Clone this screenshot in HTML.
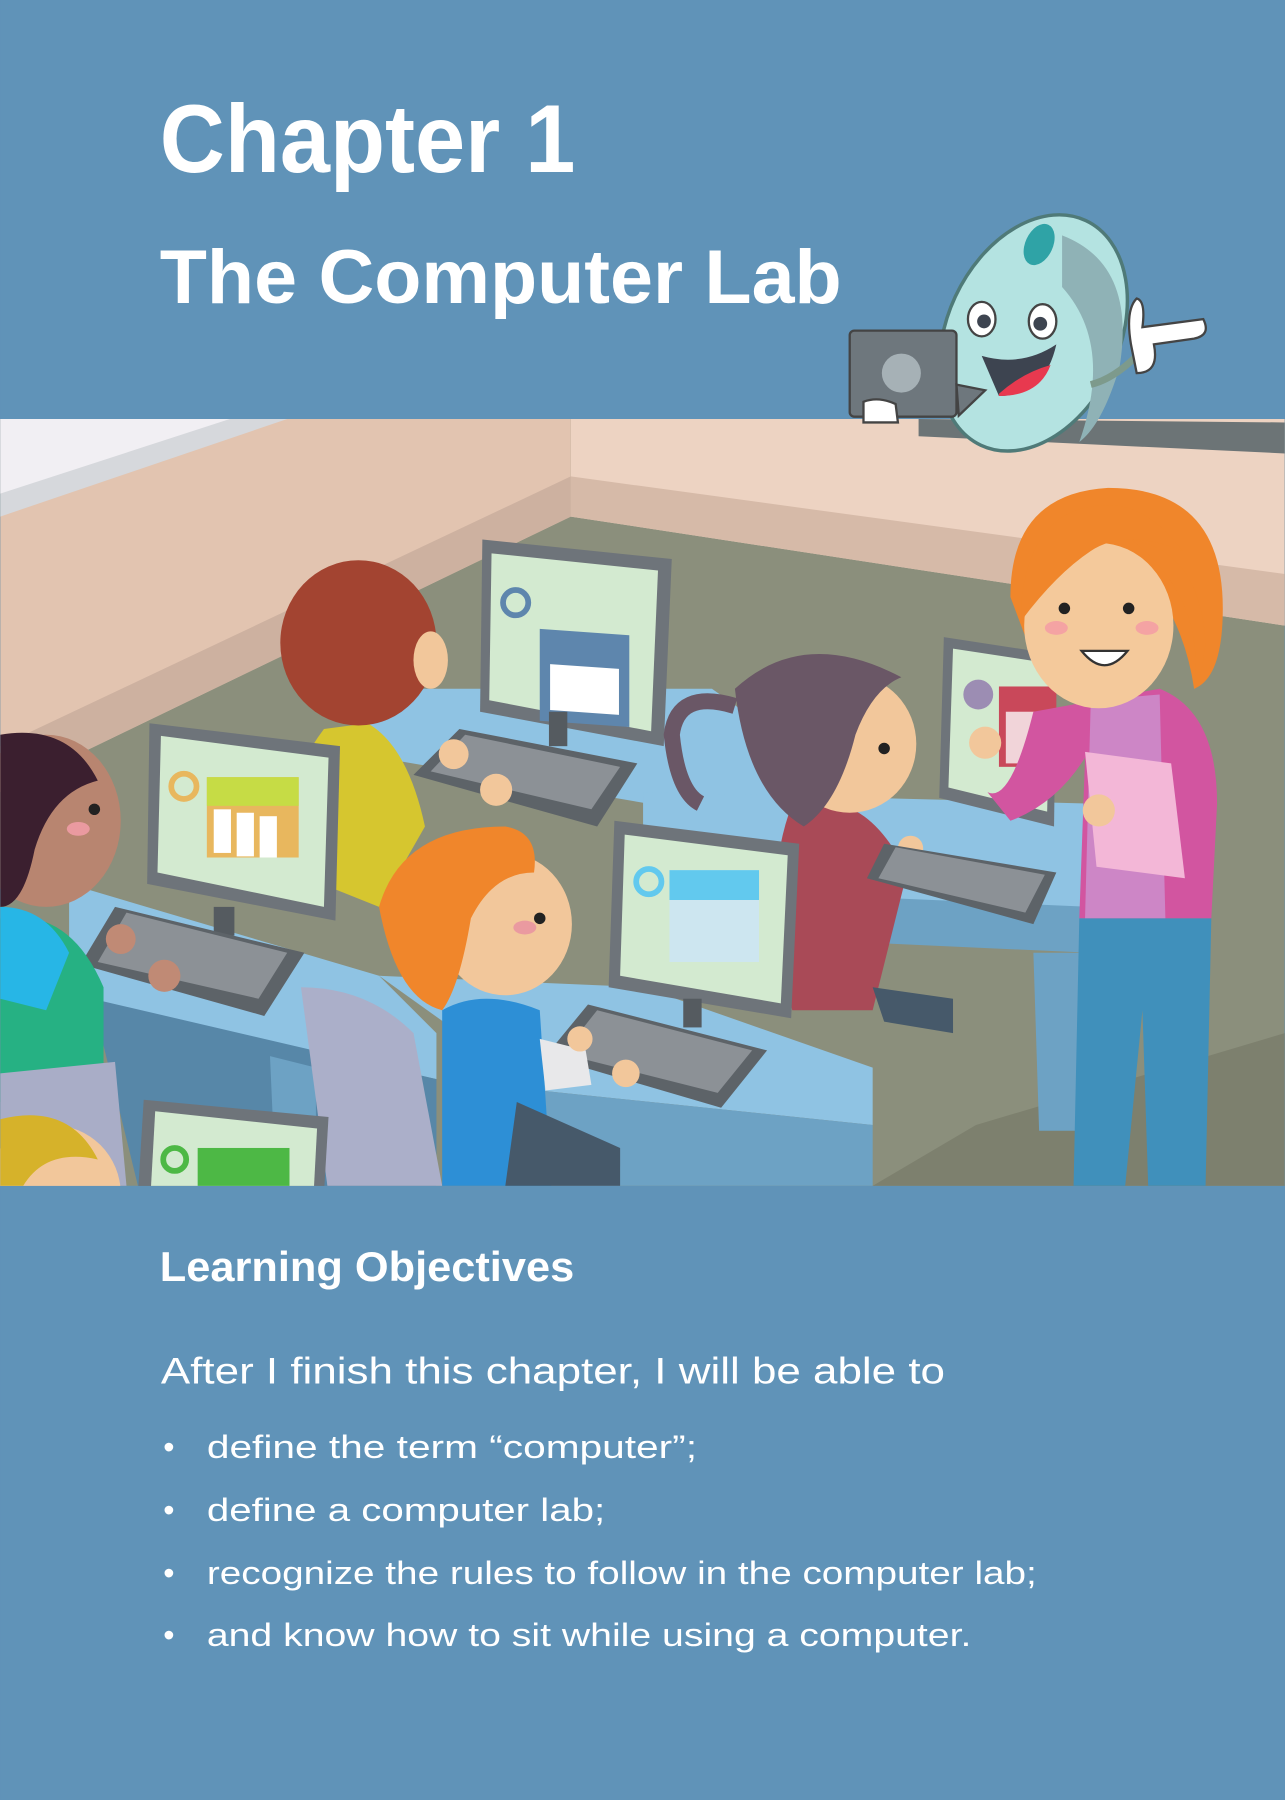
<!DOCTYPE html>
<html><head><meta charset="utf-8"><style>
html,body{margin:0;padding:0;background:#6093b8;}
svg{display:block}
</style></head><body>
<svg width="1285" height="1800" viewBox="0 0 1119 1568" xmlns="http://www.w3.org/2000/svg">
<rect width="1119" height="1568" fill="#6093b8"/>
<text x="139" y="150" font-family="Liberation Sans, sans-serif" font-weight="bold" font-size="84" textLength="362" lengthAdjust="spacingAndGlyphs" fill="#fff">Chapter 1</text>
<text x="139" y="264" font-family="Liberation Sans, sans-serif" font-weight="bold" font-size="66" textLength="594" lengthAdjust="spacingAndGlyphs" fill="#fff">The Computer Lab</text>

<g>
<clipPath id="c"><rect x="0" y="365" width="1119" height="668"/></clipPath>
<g clip-path="url(#c)">
<rect x="0" y="365" width="1119" height="668" fill="#8b8f7c"/>
<polygon points="497,365 1119,365 1119,545 497,450" fill="#edd3c2"/>
<polygon points="497,415 1119,500 1119,545 497,450" fill="#d6baa8"/>
<polygon points="800,365 1119,368 1119,395 800,380" fill="#6c7476"/>
<polygon points="0,365 497,365 497,450 0,690" fill="#e2c4b0"/>
<polygon points="0,365 250,365 0,450" fill="#d6d8dc"/>
<polygon points="0,365 200,365 0,430" fill="#f1eff3"/>
<polygon points="0,650 497,415 497,450 0,690" fill="#cdb1a0"/>
<polygon points="760,1033 1119,1033 1119,900 850,980" fill="#7d806e"/>

<polygon points="300,600 620,600 760,700 740,730 330,660" fill="#8fc3e3"/>
<polygon points="560,690 950,700 950,830 560,760" fill="#8fc3e3"/>
<polygon points="720,780 950,790 950,830 730,820" fill="#6da2c4"/>
<polygon points="900,830 940,830 940,985 905,985" fill="#6da2c4"/>
<polygon points="420,470 585,487 578,650 418,620" fill="#6e747a"/>
<polygon points="428,482 573,497 567,637 426,610" fill="#d3ead0"/>
<rect x="470" y="515" width="78" height="80" fill="#5e86ad" transform="skewY(4)"/>
<rect x="479" y="545" width="60" height="40" fill="#fff" transform="skewY(4)"/>
<circle cx="449" cy="525" r="11" fill="none" stroke="#5e86ad" stroke-width="5"/>
<rect x="478" y="620" width="16" height="30" fill="#555b60"/>
<polygon points="400,635 555,665 520,720 360,675" fill="#5d6368"/>
<polygon points="405,640 540,668 515,705 375,672" fill="#8c9196"/>
<path d="M282,635 Q240,690 255,760 L330,790 L370,720 Q355,650 320,630 Z" fill="#d6c62f"/>
<ellipse cx="312" cy="560" rx="68" ry="72" fill="#a34431"/>
<ellipse cx="375" cy="575" rx="15" ry="25" fill="#f2c79b"/>
<circle cx="395" cy="657" r="13" fill="#f2c79b"/>
<circle cx="432" cy="688" r="14" fill="#f2c79b"/>

<path d="M690,700 Q660,780 690,880 L760,880 L790,760 Q760,700 720,700 Z" fill="#a94a57"/>
<path d="M760,860 L830,870 L830,900 L770,890 Z" fill="#46596a"/>
<ellipse cx="740" cy="648" rx="58" ry="60" fill="#f2c79b"/>
<path d="M640,600 Q700,545 785,590 Q760,600 745,640 Q730,700 700,720 Q650,690 640,600 Z" fill="#6a5766"/>
<path d="M640,615 Q590,600 585,640 Q590,690 610,700" fill="none" stroke="#6a5766" stroke-width="14"/>
<circle cx="770" cy="652" r="5" fill="#222"/>
<circle cx="793" cy="739" r="11" fill="#f2c79b"/>
<circle cx="833" cy="770" r="12" fill="#f2c79b"/>
<polygon points="822,555 920,570 918,720 818,695" fill="#6e747a"/>
<polygon points="830,565 915,578 912,707 826,686" fill="#d3ead0"/>
<circle cx="852" cy="605" r="13" fill="#9c8db3"/>
<rect x="870" y="598" width="50" height="70" fill="#c9485a"/>
<rect x="876" y="620" width="40" height="45" fill="#f1d4d9"/>
<polygon points="770,735 920,760 900,805 755,765" fill="#5d6368"/>
<polygon points="780,738 910,762 893,795 765,765" fill="#8c9196"/>

<polygon points="60,770 330,850 380,900 380,940 60,870" fill="#8fc3e3"/>
<polygon points="80,870 380,940 380,1033 120,1033" fill="#5787a8"/>
<polygon points="235,920 275,930 275,1033 240,1033" fill="#6da2c4"/>
<polygon points="130,630 296,650 292,802 128,770" fill="#6e747a"/>
<polygon points="140,641 286,660 282,790 137,760" fill="#d3ead0"/>
<rect x="180" y="677" width="80" height="70" fill="#e8b75e"/>
<rect x="180" y="677" width="80" height="25" fill="#c6dc45"/>
<rect x="186" y="705" width="15" height="38" fill="#fff"/><rect x="206" y="708" width="15" height="38" fill="#fff"/><rect x="226" y="711" width="15" height="36" fill="#fff"/>
<circle cx="160" cy="685" r="11" fill="none" stroke="#e8b75e" stroke-width="5"/>
<rect x="186" y="790" width="18" height="25" fill="#555b60"/>
<polygon points="100,790 265,830 230,885 70,840" fill="#5d6368"/>
<polygon points="110,795 250,830 225,870 85,838" fill="#8c9196"/>
<path d="M0,800 Q60,790 90,860 L90,950 L0,960 Z" fill="#26b183"/>
<path d="M0,790 Q40,790 60,830 L40,880 L0,870 Z" fill="#27b6e6"/>
<ellipse cx="40" cy="715" rx="65" ry="75" fill="#b88570"/>
<path d="M0,640 Q60,630 85,680 Q45,690 30,740 Q20,790 0,790 Z" fill="#3b1f2f"/>
<circle cx="82" cy="705" r="5" fill="#222"/>
<ellipse cx="68" cy="722" rx="10" ry="6" fill="#ea9aa0"/>
<circle cx="105" cy="818" r="13" fill="#c08a75"/>
<circle cx="143" cy="850" r="14" fill="#c08a75"/>
<path d="M0,935 L100,925 L110,1033 L0,1033 Z" fill="#a9adc7"/>

<polygon points="330,850 560,860 760,930 760,980 470,950" fill="#8fc3e3"/>
<polygon points="470,950 760,980 760,1033 470,1033" fill="#6da2c4"/>
<polygon points="535,715 696,735 689,887 530,860" fill="#6e747a"/>
<polygon points="544,727 686,745 680,874 540,850" fill="#d3ead0"/>
<rect x="583" y="758" width="78" height="80" fill="#cde6f0"/>
<rect x="583" y="758" width="78" height="26" fill="#62c9ee"/>
<circle cx="565" cy="768" r="11" fill="none" stroke="#62c9ee" stroke-width="5"/>
<rect x="595" y="870" width="16" height="25" fill="#555b60"/>
<polygon points="512,875 668,915 628,965 475,920" fill="#5d6368"/>
<polygon points="520,880 655,915 625,952 490,918" fill="#8c9196"/>
<path d="M262,860 Q320,860 360,900 L385,1033 L285,1033 Z" fill="#abafc9"/>
<path d="M385,880 Q420,860 470,880 L480,1033 L385,1033 Z" fill="#2d8fd6"/>
<path d="M470,905 L510,915 L515,945 L475,950 Z" fill="#e8e8ea"/>
<path d="M450,960 L540,1000 L540,1033 L440,1033 Z" fill="#46596a"/>
<ellipse cx="440" cy="805" rx="58" ry="62" fill="#f2c79b"/>
<path d="M330,790 Q350,720 440,720 Q470,725 465,760 Q430,760 410,800 Q400,860 385,880 Q345,870 330,790 Z" fill="#f0862b"/>
<circle cx="470" cy="800" r="5" fill="#222"/>
<ellipse cx="457" cy="808" rx="10" ry="6" fill="#ea9aa0"/>
<circle cx="505" cy="905" r="11" fill="#f2c79b"/>
<circle cx="545" cy="935" r="12" fill="#f2c79b"/>
<polygon points="125,958 286,973 282,1040 120,1040" fill="#6e747a"/>
<polygon points="135,968 276,983 273,1040 131,1040" fill="#d3ead0"/>
<rect x="172" y="1000" width="80" height="40" fill="#4db845"/>
<circle cx="152" cy="1010" r="10" fill="none" stroke="#4db845" stroke-width="5"/>
<ellipse cx="45" cy="1040" rx="60" ry="60" fill="#f2c79b"/>
<path d="M0,975 Q60,960 85,1010 Q40,1000 20,1033 L0,1033 Z" fill="#d6b22a"/>

<path d="M900,620 Q880,700 860,690 L880,715 Q920,700 945,660 L940,800 L1055,800 L1060,700 Q1060,620 1010,600 Z" fill="#d255a0"/>
<path d="M950,610 L1010,605 L1015,800 L945,800 Z" fill="#cd86c6"/>
<path d="M940,800 L1055,800 L1050,1033 L1000,1033 L995,880 L980,1033 L935,1033 Z" fill="#4090bb"/>
<polygon points="945,655 1020,665 1032,765 955,755" fill="#f3b7d7"/>
<circle cx="858" cy="647" r="14" fill="#f2c79b"/>
<circle cx="957" cy="706" r="14" fill="#f2c79b"/>
<path d="M880,520 Q880,430 965,425 Q1065,425 1065,530 Q1065,590 1040,600 Q1030,530 980,480 Q920,530 895,560 Z" fill="#f0862b"/>
<ellipse cx="957" cy="545" rx="65" ry="72" fill="#f4c99b"/>
<path d="M890,520 Q900,440 965,440 Q1000,440 1030,480 Q980,460 950,480 Q920,500 890,540 Z" fill="#f0862b"/>
<path d="M985,470 Q1045,480 1050,560 Q1045,600 1040,600 Q1050,520 985,470 Z" fill="#f0862b"/>
<circle cx="927" cy="530" r="5" fill="#222"/><circle cx="983" cy="530" r="5" fill="#222"/>
<ellipse cx="920" cy="547" rx="10" ry="6" fill="#f4a3a3"/><ellipse cx="999" cy="547" rx="10" ry="6" fill="#f4a3a3"/>
<path d="M942,567 Q962,592 982,567 Z" fill="#fff" stroke="#333" stroke-width="2"/>
</g>
</g>

<g>
<ellipse cx="900" cy="290" rx="75" ry="108" transform="rotate(25 900 290)" fill="#b4e3e1" stroke="#4f7a78" stroke-width="3"/>
<path d="M925,205 Q990,230 975,320 Q960,370 940,385 Q970,300 925,250 Z" fill="#8fb2b6"/>
<ellipse cx="905" cy="213" rx="12" ry="19" transform="rotate(25 905 213)" fill="#2fa3a6"/>
<ellipse cx="855" cy="278" rx="12" ry="15" fill="#fff" stroke="#444" stroke-width="2"/>
<ellipse cx="908" cy="280" rx="12" ry="15" fill="#fff" stroke="#444" stroke-width="2"/>
<circle cx="857" cy="280" r="6" fill="#3d4450"/><circle cx="906" cy="282" r="6" fill="#3d4450"/>
<path d="M855,310 Q890,320 920,300 Q910,345 870,345 Z" fill="#3d4450"/>
<path d="M870,343 Q890,325 915,318 Q905,345 870,345 Z" fill="#e8394f"/>
<path d="M950,335 Q970,330 990,310" fill="none" stroke="#7d9a8c" stroke-width="6"/>
<path d="M985,300 Q980,270 990,260 Q998,262 995,285 L1048,278 Q1055,292 1040,295 L1005,300 Q1010,325 990,325 Z" fill="#fff" stroke="#444" stroke-width="2"/>
<rect x="740" y="288" width="93" height="75" rx="4" fill="#6e777d" stroke="#444" stroke-width="2"/>
<circle cx="785" cy="325" r="17" fill="#a6b1b6"/>
<polygon points="833,335 858,340 835,362" fill="#6e777d" stroke="#444" stroke-width="2"/>
<path d="M752,368 L752,350 Q765,345 780,352 L782,368 Z" fill="#fff" stroke="#444" stroke-width="2"/>
</g>

<text x="139" y="1116" font-family="Liberation Sans, sans-serif" font-weight="bold" font-size="36" textLength="361" lengthAdjust="spacingAndGlyphs" fill="#fff">Learning Objectives</text>
<g font-family="Liberation Sans, sans-serif" fill="#fff">
<text x="140" y="1205" font-size="32" textLength="683" lengthAdjust="spacingAndGlyphs">After I finish this chapter, I will be able to</text>
<g font-size="28">
<text x="142" y="1270">•</text><text x="180" y="1270" textLength="427" lengthAdjust="spacingAndGlyphs">define the term “computer”;</text>
<text x="142" y="1325">•</text><text x="180" y="1325" textLength="347" lengthAdjust="spacingAndGlyphs">define a computer lab;</text>
<text x="142" y="1380">•</text><text x="180" y="1380" textLength="723" lengthAdjust="spacingAndGlyphs">recognize the rules to follow in the computer lab;</text>
<text x="142" y="1434">•</text><text x="180" y="1434" textLength="666" lengthAdjust="spacingAndGlyphs">and know how to sit while using a computer.</text>
</g></g>
</svg>
</body></html>
